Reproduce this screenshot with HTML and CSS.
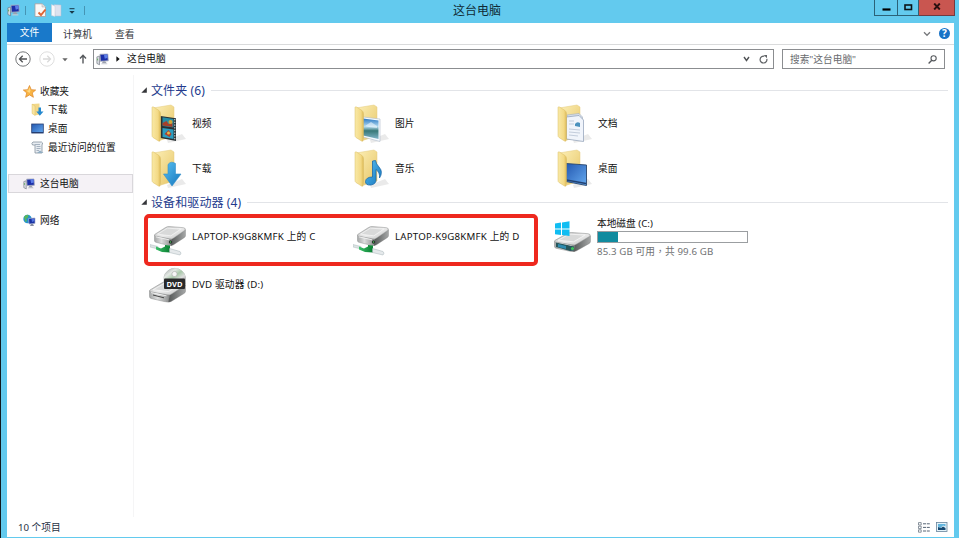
FILE: index.html
```html
<!DOCTYPE html>
<html lang="zh-CN">
<head>
<meta charset="utf-8">
<title>这台电脑</title>
<link rel="stylesheet" href="styles.css">
</head>
<body>
<svg class="defs" width="0" height="0" aria-hidden="true">
  <defs>
    <linearGradient id="gBack" x1="0" y1="0" x2="1" y2="1"><stop offset="0" stop-color="#fdf0b8"/><stop offset="1" stop-color="#e6c566"/></linearGradient>
    <linearGradient id="gFront" x1="0" y1="0" x2="1" y2="0"><stop offset="0" stop-color="#f9e9a6"/><stop offset=".7" stop-color="#f3d985"/><stop offset="1" stop-color="#dcb955"/></linearGradient>
    <linearGradient id="gBlue" x1="0" y1="0" x2="1" y2="1"><stop offset="0" stop-color="#2458b0"/><stop offset="1" stop-color="#65aaf0"/></linearGradient>
    <linearGradient id="gArrow" x1="0" y1="0" x2="1" y2="1"><stop offset="0" stop-color="#58c0f2"/><stop offset="1" stop-color="#1676bd"/></linearGradient>
    <linearGradient id="gTop" x1="0" y1="0" x2="1" y2="1"><stop offset="0" stop-color="#a9abab"/><stop offset=".5" stop-color="#ececec"/><stop offset="1" stop-color="#c0c2c2"/></linearGradient>
    <linearGradient id="gFace" x1="0" y1="0" x2="1" y2="0"><stop offset="0" stop-color="#a4a6a6"/><stop offset=".4" stop-color="#dcdddd"/><stop offset="1" stop-color="#8b8d8d"/></linearGradient>
    <linearGradient id="gSide" x1="0" y1="0" x2="1" y2="0"><stop offset="0" stop-color="#555858"/><stop offset="1" stop-color="#a6a8a8"/></linearGradient>
    <linearGradient id="gDisc" x1="0" y1="0" x2="1" y2="1"><stop offset="0" stop-color="#9a9f9e"/><stop offset=".3" stop-color="#e4e9e5"/><stop offset=".5" stop-color="#a8c9a9"/><stop offset=".7" stop-color="#dedede"/><stop offset="1" stop-color="#898c8c"/></linearGradient>
    <linearGradient id="gSky" x1="0" y1="0" x2="0" y2="1"><stop offset="0" stop-color="#2a78c4"/><stop offset=".4" stop-color="#b5dcf1"/><stop offset=".6" stop-color="#387878"/><stop offset="1" stop-color="#7fb4c8"/></linearGradient>
    <linearGradient id="gNet" x1="0" y1="0" x2="1" y2="0"><stop offset="0" stop-color="#3cc06a"/><stop offset="1" stop-color="#087d30"/></linearGradient>
    <symbol id="folder-back" viewBox="0 0 36 40">
      <path d="M16 36L31 30L35 35L17 39Z" fill="#bbb" opacity=".3"/>
      <path d="M2 4L20 1L23 3V32L10 36Z" fill="url(#gBack)" stroke="#e5cb7c" stroke-width=".5"/>
    </symbol>
    <symbol id="folder-front" viewBox="0 0 36 40">
      <path d="M1 3.500Q1 2.500 2.500 3L8 6.500Q9.500 7.500 9.500 10V35.500Q9.500 38 7.500 37L2 33.500Q1 33 1 31Z" fill="url(#gFront)" stroke="#dabd65" stroke-width=".5"/>
    </symbol>
    <symbol id="pc" viewBox="0 0 16 14">
      <path d="M1 4L4 3V13L1 11.500Z" fill="#d9dce2" stroke="#686d78" stroke-width=".7"/>
      <path d="M1.800 6V8" stroke="#55a84f"/>
      <path d="M4.500 1L13.500 .8L14 8.500L5 9Z" fill="#1b2fa8" stroke="#a9aebd" stroke-width="1"/>
      <path d="M9 1.300L13 1.200L13.300 5L10 6Z" fill="#5d7ee8"/>
      <path d="M8 9H10.500L12.500 11.500H6.500Z" fill="#9ba0ae"/>
      <path d="M6 12H13" stroke="#d2d5dc"/>
    </symbol>
    <symbol id="drive" viewBox="0 0 36 24" preserveAspectRatio="none">
      <path d="M.5 11L20 15.500V23.500Q19 24 17 23.500L2 19.500Q.5 19 .5 17.500Z" fill="url(#gFace)" stroke="#858787" stroke-width=".5"/>
      <path d="M20 15.500L35.500 4.500V11.500Q35.500 13 34 14L22 22.500Q20.500 23.500 19 23.500Z" fill="url(#gSide)" stroke="#777" stroke-width=".4"/>
      <path d="M1 10L13 1.800Q15 .5 17 .6L33 2Q36 2.500 35 5L22 14.500Q20 16 17.500 15.400L1.500 12Q0 11.500 1 10Z" fill="url(#gTop)" stroke="#8f9191" stroke-width=".6"/>
      <path d="M4 9.800L15 2.500L30 3.800L19 11.800Z" fill="#d8d9d9" stroke="#f8f8f8" stroke-width=".8"/>
      <path d="M2 13L17 16.600" stroke="#f5f5f5" stroke-width="1"/>
    </symbol>
    <symbol id="netdrive" viewBox="0 0 36 30">
      <use href="#drive" x="4" y="0" width="32" height="20"/>
      <circle cx="20.500" cy="16" r="1.700" fill="#26352b"/><circle cx="20.500" cy="16" r=".7" fill="#4ec45c"/>
      <path d="M0 18.500L8 20.500V23L0 21Z" fill="#dce4e3" stroke="#9dabb0" stroke-width=".4"/>
      <path d="M15 19L20 19.500V22H15Z" fill="#128c3b"/>
      <path d="M6 20.500L11 22.500L15 20.500L20 21.500V26.500L12 26L6 23.500Z" fill="url(#gNet)"/>
      <path d="M19.500 22.500L30 25.500Q32 27 30 29L19.500 26.500Z" fill="#e5e9eb" stroke="#a5b2b7" stroke-width=".5"/>
    </symbol>
    <symbol id="tri" viewBox="0 0 6 6"><path d="M5.800 .3V5.700H.3Z" fill="#35363a"/></symbol>
  </defs>
</svg>

<div class="window">
  <header class="titlebar">
    <div class="quick">
      <svg class="q-pc" width="14" height="13"><use href="#pc" width="14" height="13"/></svg>
      <i class="q-sep"></i>
      <svg class="q-doc" width="13" height="15" viewBox="0 0 13 15"><path d="M1 .8H8L11.500 4V13.500H1Z" fill="#fbf8f6" stroke="#a5a0a0" stroke-width=".8"/><path d="M8 .8V4H11.500" fill="#e4dfdf" stroke="#aaa" stroke-width=".5"/><path d="M4.500 9.500L7 12L11.500 6.500" fill="none" stroke="#de6535" stroke-width="1.900"/></svg>
      <svg class="q-folder" width="11" height="13" viewBox="0 0 11 13"><path d="M3 .7L10 1V12H4Z" fill="#dce2ef" stroke="#b6bfd3" stroke-width=".5"/><path d="M.5 .6L4 2V12.500L.5 11.500Z" fill="#f7f7fa" stroke="#c6cad6" stroke-width=".5"/></svg>
      <svg class="q-more" width="6" height="6" viewBox="0 0 6 6"><path d="M.5 .7H5.500" stroke="#173849" stroke-width="1"/><path d="M.3 3H5.700L3 5.700Z" fill="#173849"/></svg>
      <i class="q-sep last"></i>
    </div>
    <h1>这台电脑</h1>
    <div class="controls">
      <span class="min"><svg width="9" height="3"><path d="M.5 1.500H8.500" stroke="#000" stroke-width="2.200"/></svg></span>
      <span class="max"><svg width="9" height="7"><rect x="1" y="1" width="6.500" height="4.500" fill="none" stroke="#0c1418" stroke-width="1.600"/></svg></span>
      <span class="close"><svg width="8" height="7" viewBox="0 0 8 7"><path d="M1.200 .5L6.800 6.500M6.800 .5L1.200 6.500" stroke="#2a1010" stroke-width="1.900"/></svg></span>
    </div>
  </header>

  <main class="client">
    <nav class="ribbon">
      <span class="tab file">文件</span><span class="tab computer">计算机</span><span class="tab">查看</span>
      <svg class="expand" width="8" height="6" viewBox="0 0 8 6"><path d="M1 1.200L4 4.300L7 1.200" fill="none" stroke="#77797c" stroke-width="1.300"/></svg>
      <span class="help">?</span>
    </nav>

    <div class="toolbar">
      <svg class="back" width="16" height="16" viewBox="0 0 16 16"><circle cx="8" cy="8" r="7.200" fill="none" stroke="#77797b"/><path d="M12 8H4.800M7.700 4.800L4.500 8L7.700 11.200" fill="none" stroke="#505254" stroke-width="1.300"/></svg>
      <svg class="forward" width="16" height="16" viewBox="0 0 16 16"><circle cx="8" cy="8" r="7.200" fill="none" stroke="#dedede"/><path d="M4 8H11.200M8.300 4.800L11.500 8L8.300 11.200" fill="none" stroke="#d9d9d9" stroke-width="1.300"/></svg>
      <svg class="history" width="6" height="4"><path d="M.3 .3H5.700L3 3.300Z" fill="#666"/></svg>
      <svg class="up" width="8" height="10" viewBox="0 0 8 10"><path d="M4 9.500V1.500M1 4.500L4 1.300L7 4.500" fill="none" stroke="#55585c" stroke-width="1.400"/></svg>
      <div class="address">
        <svg class="a-pc" width="14" height="13"><use href="#pc" width="14" height="13"/></svg>
        <svg class="a-arrow" width="4" height="6"><path d="M.4 .2L3.700 3L.4 5.800Z" fill="#111"/></svg>
        <span>这台电脑</span>
        <svg class="a-down" width="7" height="6" viewBox="0 0 7 6"><path d="M1 1L3.500 4.500L6 1" fill="none" stroke="#505356" stroke-width="1.400"/></svg>
        <svg width="9" height="9" viewBox="0 0 9 9"><path d="M7.800 3.800A3.400 3.400 0 1 1 5.300 1.300" fill="none" stroke="#616467" stroke-width="1.200"/><path d="M4.700 0H8V3.300Z" fill="#616467"/></svg>
      </div>
      <div class="search"><span>搜索"这台电脑"</span>
        <svg width="9" height="9" viewBox="0 0 9 9"><circle cx="5.600" cy="3.300" r="2.600" fill="none" stroke="#56595d" stroke-width="1.100"/><path d="M3.800 5.200L.6 8.400" stroke="#56595d" stroke-width="1.400"/></svg>
      </div>
    </div>

    <div class="body">
      <aside>
        <div class="nav root">
          <svg width="13" height="13" viewBox="0 0 13 13"><path d="M6.500 .5L8.300 4.700L12.700 5L9.300 7.900L10.400 12.300L6.500 9.900L2.600 12.300L3.700 7.900L.3 5L4.700 4.700Z" fill="#f9b443" stroke="#dd852a" stroke-width=".7"/><path d="M6.500 2.200L7.500 5.400L6.500 8L3 5.600L5.300 5.400Z" fill="#ffd780"/></svg><span>收藏夹</span></div>
        <div class="nav child">
          <svg width="13" height="13" viewBox="0 0 13 13"><path d="M1 1L8.500 .5V11.500L4 12.500Z" fill="#f2d889"/><path d="M1 1L4 3V12.500L1 10.500Z" fill="#f9e5a0" stroke="#d5b55e" stroke-width=".4"/><path d="M7.500 4.500H10V8.500H12.500L8.800 12.800L5.300 8.500H7.500Z" fill="#2589cf"/></svg><span>下载</span></div>
        <div class="nav child">
          <svg width="13" height="11" viewBox="0 0 13 11"><rect x=".7" y="1" width="11.600" height="9" fill="url(#gBlue)" stroke="#283f73" stroke-width=".8"/><path d="M1 9.600H12" stroke="#243a6b"/></svg><span>桌面</span></div>
        <div class="nav child">
          <svg width="13" height="13" viewBox="0 0 13 13"><path d="M2 1H10.500Q12.500 1.500 11 4V12H4V4H1.500Q0 2 2 1Z" fill="#e8edf2" stroke="#86939f" stroke-width=".8"/><path d="M4 3.500H9M5.500 5.500H9.500M5.500 7.500H9.500M5.500 9.500H8" stroke="#8a98aa" stroke-width=".7"/><path d="M9 9.500L12.500 12H6Z" fill="#91aec3"/></svg><span>最近访问的位置</span></div>
        <div class="nav root selected">
          <svg width="13" height="12"><use href="#pc" width="13" height="12"/></svg><span>这台电脑</span></div>
        <div class="nav root network">
          <svg width="13" height="13" viewBox="0 0 13 13"><circle cx="4.500" cy="5" r="4.200" fill="#2792cf"/><path d="M1 3Q3 0 5.500 1L5 3.500L3 5L4 7L2.500 8Z" fill="#57b75d"/><path d="M5.500 4.500L12 4V9.500L6 10Z" fill="#1932a3" stroke="#aab1cf" stroke-width=".7"/><path d="M8.500 5H11.500V7L9 8Z" fill="#5073df"/><path d="M8 10H10L11 12H7Z" fill="#888fa3"/></svg><span>网络</span></div>
      </aside>

      <section class="content">
        <h2 class="group"><svg width="6" height="6"><use href="#tri" width="6" height="6"/></svg><span>文件夹 (6)</span><i></i></h2>
        <div class="grid folders">
          <div class="item">
            <svg width="36" height="40" viewBox="0 0 36 40"><use href="#folder-back" width="36" height="40"/><g transform="translate(9.500 12)"><path d="M0 0L15.500 2.200V25L0 22Z" fill="#293134"/><path d="M2 1.300L13 3V11.500L2 10Z" fill="#268da6"/><path d="M2 12L13 13.500V23L2 21Z" fill="#2b9dc0"/><path d="M2 7L6 5L8 8L12 7V11L2 9.500Z" fill="#a63f2a"/><circle cx="10" cy="6" r="2" fill="#d2a736"/><path d="M4 18L8 14L11 18L9 21Z" fill="#ad432c"/><circle cx="8" cy="17" r="1.500" fill="#e5b94b"/><path d="M14.300 3V24" stroke="#e5e8e7" stroke-width="1" stroke-dasharray="1.400 1.300"/></g><use href="#folder-front" width="36" height="40"/></svg><span>视频</span></div>
          <div class="item">
            <svg width="36" height="40" viewBox="0 0 36 40"><use href="#folder-back" width="36" height="40"/><path d="M9 13L26 15V37.500L9 33Z" fill="#f5faff" stroke="#afbbc9" stroke-width=".6"/><path d="M9 14.500L24.500 16.500V35L9 31.500Z" fill="url(#gSky)"/><path d="M11 22L17 18L23 22V24L15 23Z" fill="#fff" opacity=".5"/><use href="#folder-front" width="36" height="40"/></svg><span>图片</span></div>
          <div class="item">
            <svg width="36" height="40" viewBox="0 0 36 40"><use href="#folder-back" width="36" height="40"/><path d="M10 11L22 9.500L25.500 13V36L10 34Z" fill="#d7dfeb" stroke="#a3aebb" stroke-width=".6"/><path d="M9.500 13L22 11.500L26.500 16V37.500L9.500 35Z" fill="#f0f4fb" stroke="#8b9cb4" stroke-width=".7"/><path d="M12 17H17M12 20H17M12 25L23 26M12 28L23 29M12 31L21 32" stroke="#c3cddc" stroke-width="1"/><path d="M18 20Q20 17 23 19V23L18 22Z" fill="#4b91bd"/><use href="#folder-front" width="36" height="40"/></svg><span>文档</span></div>
          <div class="item">
            <svg width="36" height="40" viewBox="0 0 36 40"><use href="#folder-back" width="36" height="40"/><use href="#folder-front" width="36" height="40"/><path d="M17 15.500Q20 11.500 24.500 14.500V25H30L21 37L12.500 25H17Z" fill="url(#gArrow)" stroke="#3491ca" stroke-width=".6"/></svg><span>下载</span></div>
          <div class="item">
            <svg width="36" height="40" viewBox="0 0 36 40"><use href="#folder-back" width="36" height="40"/><use href="#folder-front" width="36" height="40"/><path d="M18.500 12L21.500 11.500Q22 15 25 18Q29.500 23 25.500 29Q26 23 22 20.500V31Q22 35 17 36Q11.500 36.500 11.500 32.500Q12 28 18.500 28Z" fill="url(#gArrow)" stroke="#1d69aa" stroke-width=".8"/></svg><span>音乐</span></div>
          <div class="item">
            <svg width="36" height="40" viewBox="0 0 36 40"><use href="#folder-back" width="36" height="40"/><path d="M9 14.500L29.500 16V36.500L9 32.500Z" fill="url(#gBlue)" stroke="#29466d" stroke-width=".9"/><path d="M9.500 31L29 34.500" stroke="#224171" stroke-width="1.300"/><use href="#folder-front" width="36" height="40"/></svg><span>桌面</span></div>
        </div>
        <h2 class="group"><svg width="6" height="6"><use href="#tri" width="6" height="6"/></svg><span>设备和驱动器 (4)</span><i></i></h2>
        <div class="grid drives">
          <div class="item net"><svg width="36" height="30"><use href="#netdrive" width="36" height="30"/></svg><span>LAPTOP-K9G8KMFK 上的 C</span></div>
          <div class="item net"><svg width="36" height="30"><use href="#netdrive" width="36" height="30"/></svg><span>LAPTOP-K9G8KMFK 上的 D</span></div>
          <div class="item local">
            <svg width="38" height="32" viewBox="0 0 38 32"><use href="#drive" x="0" y="11" width="37" height="20"/><path d="M2 21.500L20 25.500V29.500L16 30L2 26Z" fill="#27575c"/><path d="M4 23L12 25V28L4 26Z" fill="#2f8cb0"/><circle cx="18.500" cy="27.500" r="1.600" fill="#3fc35e"/><path d="M1 2.500L7 1.600V7.500H1ZM8 1.400L15.500 .3V7.500H8ZM1 8.500H7V14L1 13.200ZM8 8.500H15.500V15L8 14.100Z" fill="#10bdf2"/></svg>
            <div class="details"><span>本地磁盘 (C:)</span><div class="bar"><b></b></div><span class="space" lang="zh-TW">85.3 GB 可用，共 99.6 GB</span></div></div>
          <div class="item dvd">
            <svg width="38" height="37" viewBox="0 0 38 37"><path d="M15 23V11A11 11 0 0 1 36.500 11V20L28 25Z" fill="url(#gDisc)" stroke="#9b9f9f" stroke-width=".5"/><use href="#drive" x="0" y="15" width="37" height="21.500"/><path d="M15 18V11A11 11 0 0 1 36.500 11V18Z" fill="url(#gDisc)"/><circle cx="25.500" cy="8" r="2.600" fill="#f6f6f6" stroke="#aaa" stroke-width=".6"/><rect x="15" y="12.500" width="21" height="10.500" rx="1" fill="#29292a"/><text x="25.500" y="20.600" text-anchor="middle" class="disc-label">DVD</text><path d="M4 29L15 31.800" stroke="#444" stroke-width="1"/></svg><span>DVD 驱动器 (D:)</span></div>
          <div class="highlight"></div>
        </div>
      </section>
    </div>

    <footer><span>10 个项目</span>
      <svg class="v-list" width="12" height="11" viewBox="0 0 12 11"><path d="M.5 .6H3.200V3H.5ZM.5 4.200H3.200V6.600H.5ZM.5 7.800H3.200V10.200H.5Z" fill="#fff" stroke="#6c7784" stroke-width=".8"/><path d="M5 1.800H12M5 5.400H12M5 9H12" stroke="#566475" stroke-width="1" stroke-dasharray="3 .8"/></svg>
      <svg width="12" height="10" viewBox="0 0 12 10"><rect x=".5" y=".5" width="10.500" height="9" fill="#e4f3fa" stroke="#66849c" stroke-width=".8"/><path d="M2 2H9.500V4.500L7 3.500L4.500 6L2 4.500Z" fill="#62b5dd"/><path d="M2 5L5 6L7 4.500L9.500 6V8H2Z" fill="#174971"/></svg>
    </footer>
  </main>
</div>
</body>
</html>
```
FILE: styles.css
```css
* { box-sizing: border-box; }
body {
  margin: 0;
  font: 9.7px/14px "Noto Sans", "Noto Sans CJK SC", sans-serif;
  color: #111;
}
svg { display: block; flex: none; }
.defs { position: absolute; }
.window {
  width: 959px;
  height: 538px;
  overflow: hidden;
  background: #63caee;
  border-left: 1px solid #10191d;
  padding: 0 5px 1px 6px;
}
.titlebar {
  height: 23px;
  display: grid;
  grid-template-columns: 446px auto 1fr;
}
.titlebar h1 {
  margin: 0;
  font-size: 12px;
  font-weight: 400;
  line-height: 22px;
  color: #102a35;
}
.quick { display: flex; align-items: center; height: 21px; }
.q-sep { width: 1px; height: 9px; background: #4595b4; margin: 0 8px 0 4px; }
.q-sep.last { margin: 0 0 0 9px; }
.q-folder { margin: 0 7px 0 4px; }
.controls { display: flex; justify-content: flex-end; align-items: flex-start; height: 16px; margin-right: -1px; }
.controls span {
  height: 16px;
  border: 1px solid #2b6278;
  border-top: 0;
  display: flex;
  align-items: center;
  justify-content: center;
}
.min { width: 24px; padding-top: 3px; }
.max { width: 21px; border-left: 0 !important; padding-bottom: 1px; }
.close { width: 36px; background: #c95650; border-color: #713b40 !important; border-left: 0 !important; padding-bottom: 2px; }
.client { height: 514px; background: #fff; display: flex; flex-direction: column; }
.ribbon { height: 22px; display: flex; border-bottom: 1px solid #dadbdc; color: #36393d; }
.tab { line-height: 23px; }
.file { width: 45px; height: 19px; line-height: 20px; text-align: center; background: #1979ca; color: #fff; }
.computer { margin: 0 23px 0 11px; }
.expand { margin: 8px 8px 0 auto; }
.help {
  width: 11px;
  height: 11px;
  margin: 5px 4px 0 0;
  border-radius: 50%;
  background: #1873c7;
  color: #fff;
  font-size: 10px;
  font-weight: 700;
  line-height: 11px;
  text-align: center;
}
.toolbar { height: 30px; padding: 4px 9px 0 8px; display: flex; align-items: flex-start; }
.back { margin-top: 2px; }
.forward { margin: 2px 7px 0 8px; }
.history { margin-top: 9px; }
.up { margin: 5px 6px 0 11px; }
.address { width: 681px; height: 20px; border: 1px solid #8b8d90; display: flex; align-items: center; padding: 0 5px 0 2px; }
.address span { margin-left: -1px; }
.a-arrow { margin: 0 8px 0 6px; }
.a-down { margin: 0 9px 0 auto; }
.search { width: 163px; height: 20px; margin-left: 8px; border: 1px solid #8b8d90; display: flex; align-items: center; justify-content: space-between; padding: 0 7px 0 7px; color: #696b6e; }
.search span { padding-top: 1px; }
.body { flex: 1; display: flex; }
aside { width: 127px; border-right: 1px solid #f5f5f6; padding: 7px 0 0 1px; }
.nav { display: flex; align-items: center; gap: 4px; height: 18.600px; white-space: nowrap; }
.nav span { padding-top: 1px; }
.root { padding-left: 15px; }
.child { padding-left: 23px; }
.selected { height: 19px; margin-top: 18px; background: #f5f2f6; border: 1px solid #d9d7db; padding-left: 14px; }
.network { margin-top: 18px; }
.content { flex: 1; padding: 7px 6px 0 7px; }
.group { display: flex; align-items: center; height: 16px; margin: 0; font-size: 12px; font-weight: 400; color: #233b8d; white-space: nowrap; letter-spacing: .1px; }
.group span { margin: 0 6px 0 4px; padding-top: 1px; }
.group i { flex: 1; height: 1px; background: #e2e4e8; }
.grid { display: grid; grid-template-columns: repeat(3, 203px); position: relative; }
.item { display: flex; align-items: center; white-space: nowrap; padding-left: 10px; }
.item > span { margin-left: 5px; }
.folders { grid-auto-rows: 45.500px; padding-top: 3px; height: 96px; }
.drives { grid-template-rows: 48px 48px; padding-top: 3px; }
.net { align-items: flex-start; padding: 13px 0 0 9px; }
.net > span { margin: 4px 0 0 6px; letter-spacing: .21px; }
.local { align-items: flex-start; padding: 8px 0 0 7px; }
.details { margin: -4px 0 0 5px; }
.details span { display: block; }
.bar { width: 151px; height: 12px; margin: 0 0 2px; border: 1px solid #9b9ea1; background: #fff; }
.bar b { display: block; width: 20px; height: 10px; background: #108b9f; }
.details .space { color: #707274; font-family: "Noto Sans", "Noto Sans CJK TC", sans-serif; letter-spacing: .12px; }
.dvd { align-items: flex-start; padding: 5px 0 0 8px; }
.dvd > span { margin: 12px 0 0 5px; letter-spacing: .15px; }
.disc-label { font: 700 7.500px "Noto Sans", sans-serif; fill: #fff; }
.highlight { position: absolute; left: 3px; top: 4px; width: 394px; height: 52px; border: 4px solid #ee281e; border-radius: 5px; }
footer { height: 20px; display: flex; align-items: center; padding: 0 6px 0 11px; color: #273345; }
footer span { padding-top: 1px; }
.v-list { margin: 0 6px 0 auto; }
```
